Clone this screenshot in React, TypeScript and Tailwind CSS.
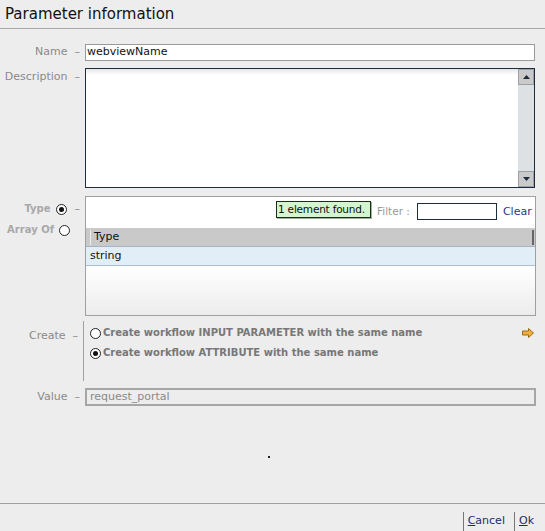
import React from "react";

const Radio = ({ checked }: { checked?: boolean }) => (
  <span className="inline-flex h-[11px] w-[11px] shrink-0 items-center justify-center rounded-full border border-[#222] bg-white">
    {checked && <span className="h-[5px] w-[5px] rounded-full bg-[#111]" />}
  </span>
);

export default function App() {
  return (
    <div
      className="flex h-[531px] w-[545px] flex-col overflow-hidden whitespace-nowrap bg-[#ededed] text-[11px] text-[#111]"
      style={{ fontFamily: '"DejaVu Sans", Verdana, sans-serif' }}
    >
      {/* Header */}
      <div className="flex h-[29px] shrink-0 items-center border-b border-[#a8a8a8] pl-[5px] text-[15px] leading-none text-[#111]">
        Parameter information
      </div>

      {/* Body */}
      <div className="flex flex-1 flex-col pt-[15px]">
        {/* Name */}
        <div className="flex h-[17px] items-center">
          <div className="flex w-[85px] justify-end pr-[5px] text-[#8a8a8a]">
            Name&nbsp;&nbsp;–
          </div>
          <div className="flex h-[17px] w-[450px] items-center border border-[#9a9a9a] bg-white pl-[1px] text-[11px] text-[#111]">
            webviewName
          </div>
        </div>

        {/* Description */}
        <div className="mt-[7px] flex h-[120px]">
          <div className="flex w-[85px] justify-end pr-[5px] pt-[1px] text-[#8a8a8a]">
            Description&nbsp;&nbsp;–
          </div>
          <div className="flex h-[120px] w-[450px] border border-[#1c2d3d] bg-white">
            <div className="flex-1 bg-gradient-to-b from-[#e6e6e6] to-white to-[5%]" />
            <div className="flex w-[16px] flex-col bg-[#dde1e4]">
              <div className="flex h-[16px] items-center justify-center border border-[#9aa0a6] bg-[#cacaca]">
                <svg width="7" height="4" viewBox="0 0 7 4">
                  <path d="M3.5 0L7 4H0z" fill="#1c2d3d" />
                </svg>
              </div>
              <div className="flex-1" />
              <div className="flex h-[16px] items-center justify-center border border-[#9aa0a6] bg-[#cacaca]">
                <svg width="7" height="4" viewBox="0 0 7 4">
                  <path d="M0 0H7L3.5 4z" fill="#1c2d3d" />
                </svg>
              </div>
            </div>
          </div>
        </div>

        {/* Type */}
        <div className="mt-[8px] flex h-[120px]">
          <div className="flex w-[85px] flex-col items-end pr-[5px] pt-[7px] text-[10px] font-bold leading-[12px] text-[#a8a8a8]">
            <div className="flex items-center gap-[5px]">
              <span>Type</span>
              <Radio checked />
              <span className="ml-[3px] text-[11px] font-normal text-[#8a8a8a]">–</span>
            </div>
            <div className="mt-[9px] flex items-center gap-[5px] pr-[10px]">
              <span>Array Of</span>
              <Radio />
            </div>
          </div>
          <div className="flex h-[120px] w-[451px] flex-col border border-[#a0a0a0] bg-white">
            <div className="flex h-[31px] items-start pt-[4px]">
              <div className="ml-[190px] flex h-[17px] w-[95px] items-center border border-[#1d2a1d] bg-[#d3f6cf] pl-[1px] text-[10.5px] tracking-[-0.2px] text-[#111] shadow-[1px_1px_0_#9bb49b]">
                1 element found.
              </div>
              <span className="ml-[6px] mt-[3px] text-[10.5px] text-[#9a9a9a]">Filter :</span>
              <div className="ml-[7px] mt-[2px] h-[17px] w-[80px] border border-[#1c2d3d] bg-white" />
              <span className="ml-[6px] mt-[3px] text-[#2a3a80]">Clear</span>
            </div>
            <div className="flex h-[19px] items-center border-b border-[#a6b4c2] bg-[#c9c9c9] pl-[4px]">
              <span className="mr-[3px] h-[15px] w-px bg-[#eee]" />
              <span className="flex-1">Type</span>
              <span className="mr-[1px] h-[15px] w-[2px] bg-[#666]" />
            </div>
            <div className="flex h-[19px] items-center border-b border-[#a9bfd3] bg-[#e1eef8] pl-[4px] pt-[1px]">
              string
            </div>
            <div className="flex-1 bg-gradient-to-b from-white to-[#ececec]" />
          </div>
        </div>

        {/* Create */}
        <div className="mt-[5px] flex h-[60px]">
          <div className="flex w-[83px] justify-end pr-[5px] pt-[7px] text-[#8a8a8a]">
            Create&nbsp;&nbsp;–
          </div>
          <div className="flex w-[452px] border-l border-[#a0a0a0] pl-[6px] pt-[6px]">
            <div className="flex flex-1 flex-col gap-[8px] text-[10px] font-bold leading-[12px] text-[#777]">
              <div className="flex items-center gap-[2px]">
                <Radio />
                <span>Create workflow INPUT PARAMETER with the same name</span>
              </div>
              <div className="flex items-center gap-[2px]">
                <Radio checked />
                <span>Create workflow ATTRIBUTE with the same name</span>
              </div>
            </div>
            <div className="pr-[1px] pt-[1px]">
              <svg width="12" height="10" viewBox="0 0 12 10">
                <path
                  d="M0.5 3H6.5V0.5L11.5 5L6.5 9.5V7H0.5Z"
                  fill="#f0b040"
                  stroke="#9a6a1a"
                  strokeWidth="1"
                />
              </svg>
            </div>
          </div>
        </div>

        {/* Value */}
        <div className="mt-[7px] flex h-[18px] items-center">
          <div className="flex w-[85px] justify-end pr-[5px] text-[#8a8a8a]">
            Value&nbsp;&nbsp;–
          </div>
          <div className="flex h-[18px] w-[451px] items-center border-2 border-[#a6a6a6] bg-[#ededed] pl-[3px] text-[#8a8a8a]">
            request_portal
          </div>
        </div>

        <div className="flex flex-1 items-start">
          <span className="ml-[268px] mt-[50px] h-[2px] w-[2px] bg-[#222]" />
        </div>
      </div>

      {/* Footer */}
      <div className="flex h-[28px] shrink-0 items-end justify-end border-t border-[#a0a0a0] pr-[11px] text-[11px] text-[#1b2b6b]">
        <div className="flex h-[19px] items-center border-l border-[#777] pl-[4px] pr-[9px]">
          <span>
            <span className="underline">C</span>ancel
          </span>
        </div>
        <div className="flex h-[19px] items-center border-l border-[#777] pl-[4px]">
          <span>
            <span className="underline">O</span>k
          </span>
        </div>
      </div>
    </div>
  );
}
